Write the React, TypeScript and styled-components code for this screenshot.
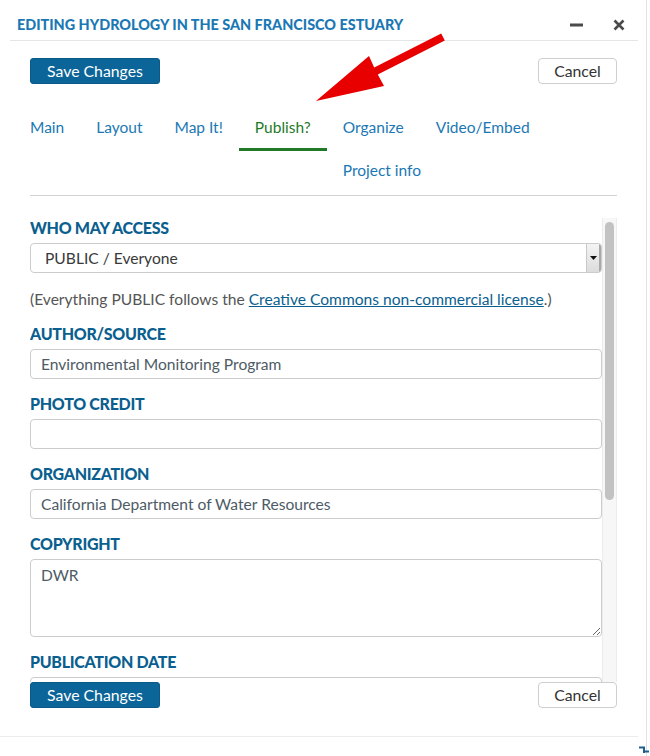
import * as React from "react";
import styled, { createGlobalStyle } from "styled-components";

const GlobalStyle = createGlobalStyle`
  html, body {
    margin: 0;
    padding: 0;
    background: #ffffff;
    overflow: hidden;
  }
  body {
    font-family: "Lato", "Open Sans", sans-serif;
    color: #333333;
  }
  * {
    box-sizing: border-box;
  }
`;

const Dialog = styled.div`
  position: relative;
  width: 647px;
  height: 756px;
  border-right: 1px solid #e2e2e2;
  display: flex;
  flex-direction: column;
`;

const Header = styled.div`
  display: flex;
  align-items: center;
  margin: 0 8px 0 10px;
  padding: 15px 12px 5px 7px;
  border-bottom: 1px solid #e6e6e6;
`;

const Title = styled.h1`
  flex: 1;
  margin: 0;
  font-size: 14.4px;
  line-height: 20px;
  font-weight: 900;
  color: #1b78b4;
  text-transform: uppercase;
`;

const WindowButton = styled.button<{ $gap: number }>`
  border: 0;
  background: none;
  padding: 0;
  margin-left: ${(p) => p.$gap}px;
  width: 14px;
  height: 20px;
  display: flex;
  align-items: center;
  justify-content: center;
  cursor: pointer;
`;

const Toolbar = styled.div<{ $top: number }>`
  display: flex;
  justify-content: space-between;
  align-items: center;
  margin: ${(p) => p.$top}px 29px 0 30px;
`;

const PrimaryButton = styled.button`
  height: 26px;
  width: 130px;
  padding: 0;
  border: 1px solid #095a87;
  border-radius: 3px;
  background: #0b6598;
  color: #ffffff;
  font-family: "Lato", sans-serif;
  font-size: 15.8px;
  line-height: 24px;
`;

const SecondaryButton = styled.button`
  height: 26px;
  width: 79px;
  padding: 0;
  border: 1px solid #cfcfcf;
  border-radius: 4px;
  background: #ffffff;
  color: #333333;
  font-family: "Lato", sans-serif;
  font-size: 15.8px;
  line-height: 24px;
`;

const TabBar = styled.div`
  margin: 21px 29px 0 30px;
  padding-bottom: 4px;
  border-bottom: 1px solid #d2d2d2;
`;

const TabList = styled.ul`
  display: flow-root;
  list-style: none;
  margin: 0 0 0 -16px;
  padding: 0;
`;

const Tab = styled.li<{ $active?: boolean }>`
  float: left;
  padding: 12px 16px 11px;
  font-size: 15.5px;
  line-height: 20px;
  color: ${(p) => (p.$active ? "#1f7a28" : "#1b78b4")};
  border-bottom: ${(p) => (p.$active ? "3px solid #1f7a28" : "0")};
  cursor: pointer;
`;

const ScrollFrame = styled.div`
  display: flex;
  margin: 22px 29px 0 30px;
  height: 464px;
`;

const ScrollContent = styled.div`
  flex: 1;
  min-width: 0;
  overflow: hidden;
`;

const ScrollTrack = styled.div`
  width: 15px;
  padding: 4px 2px 0 2px;
  background: #f7f7f7;
  border-left: 1px solid #ececec;
  border-right: 1px solid #ececec;
`;

const ScrollThumb = styled.div`
  height: 278px;
  border-radius: 5px;
  background: #c2c2c2;
`;

const Field = styled.div`
  margin-bottom: 15px;
`;

const Label = styled.label`
  display: block;
  margin-bottom: 5px;
  font-size: 16px;
  line-height: 20px;
  font-weight: 900;
  letter-spacing: -0.3px;
  color: #0b5f8f;
  text-transform: uppercase;
`;

const TextInput = styled.input`
  display: block;
  width: 100%;
  height: 30px;
  padding: 0 10px;
  border: 1px solid #cccccc;
  border-radius: 4px;
  font-family: "Lato", sans-serif;
  font-size: 15.6px;
  color: #4e5b66;
  outline: none;
`;

const TextArea = styled.textarea`
  display: block;
  width: 100%;
  height: 78px;
  padding: 5px 10px;
  border: 1px solid #cccccc;
  border-radius: 4px;
  font-family: "Lato", sans-serif;
  font-size: 15.6px;
  line-height: 20px;
  color: #4e5b66;
  outline: none;
  resize: vertical;
`;

const SelectBox = styled.div`
  display: flex;
  align-items: stretch;
  height: 30px;
  border: 1px solid #cccccc;
  border-radius: 4px;
  overflow: hidden;
`;

const SelectValue = styled.span`
  flex: 1;
  padding-left: 14px;
  font-size: 15.6px;
  line-height: 28px;
  color: #3a3a3a;
`;

const SelectArrow = styled.span`
  width: 15px;
  display: flex;
  align-items: center;
  justify-content: center;
  background: linear-gradient(#f4f4f4, #dcdcdc);
  border-left: 1px solid #c8c8c8;
  border-right: 2px solid #a9a9a9;
`;

const Note = styled.p`
  margin: 16px 0 15px;
  font-size: 15.6px;
  line-height: 20px;
  color: #555555;
`;

const NoteLink = styled.a`
  color: #0b5f8f;
  text-decoration: underline;
`;

const Footer = styled.div`
  margin: 28px 8px 0 0;
  border-top: 1px solid #ececec;
  flex: 1;
  display: flex;
  justify-content: flex-end;
  align-items: flex-end;
  padding: 0 0 3px;
`;

const ResizeGrip = styled.svg`
  margin-right: -11px;
`;

const ArrowOverlay = styled.svg`
  position: absolute;
  left: 0;
  top: 0;
  pointer-events: none;
`;

const tabs = ["Main", "Layout", "Map It!", "Publish?", "Organize", "Video/Embed", "Project info"];

export default function App() {
  return (
    <>
      <GlobalStyle />
      <Dialog>
        <Header>
          <Title>Editing Hydrology in the San Francisco Estuary</Title>
          <WindowButton $gap={0} aria-label="Minimize">
            <svg width="13" height="4" viewBox="0 0 13 4">
              <rect x="0" y="0.5" width="13" height="3" fill="#4a4a4a" />
            </svg>
          </WindowButton>
          <WindowButton $gap={29} aria-label="Close">
            <svg width="12" height="12" viewBox="0 0 12 12">
              <path d="M1.5 1.5 L10.5 10.5 M10.5 1.5 L1.5 10.5" stroke="#4a4a4a" strokeWidth="2.6" />
            </svg>
          </WindowButton>
        </Header>

        <Toolbar $top={17}>
          <PrimaryButton>Save Changes</PrimaryButton>
          <SecondaryButton>Cancel</SecondaryButton>
        </Toolbar>

        <TabBar>
          <TabList>
            {tabs.map((t) => (
              <Tab key={t} $active={t === "Publish?"}>
                {t}
              </Tab>
            ))}
          </TabList>
        </TabBar>

        <ScrollFrame>
          <ScrollContent>
            <Field>
              <Label>Who may access</Label>
              <SelectBox>
                <SelectValue>PUBLIC / Everyone</SelectValue>
                <SelectArrow>
                  <svg width="7" height="4" viewBox="0 0 7 4">
                    <path d="M0 0 H7 L3.5 4 Z" fill="#111" />
                  </svg>
                </SelectArrow>
              </SelectBox>
              <Note>
                (Everything PUBLIC follows the{" "}
                <NoteLink href="#">Creative Commons non-commercial license</NoteLink>.)
              </Note>
            </Field>
            <Field>
              <Label>Author/Source</Label>
              <TextInput defaultValue="Environmental Monitoring Program" />
            </Field>
            <Field>
              <Label>Photo credit</Label>
              <TextInput defaultValue="" />
            </Field>
            <Field>
              <Label>Organization</Label>
              <TextInput defaultValue="California Department of Water Resources" />
            </Field>
            <Field>
              <Label>Copyright</Label>
              <TextArea defaultValue="DWR" />
            </Field>
            <Field>
              <Label>Publication date</Label>
              <TextInput defaultValue="" />
            </Field>
          </ScrollContent>
          <ScrollTrack>
            <ScrollThumb />
          </ScrollTrack>
        </ScrollFrame>

        <Toolbar $top={0}>
          <PrimaryButton>Save Changes</PrimaryButton>
          <SecondaryButton>Cancel</SecondaryButton>
        </Toolbar>

        <Footer>
          <ResizeGrip width="10" height="9" viewBox="0 0 10 9">
            <path d="M0 3.5 H5 V9 M5 7.5 H10" stroke="#1d5f8f" strokeWidth="2" fill="none" />
          </ResizeGrip>
        </Footer>

        <ArrowOverlay width="650" height="120" viewBox="0 0 650 120">
          <polygon
            points="441.2,33.4 444.8,40.6 377.8,74.6 384,86 316,101 369,56 374.2,67.4"
            fill="#e80000"
          />
        </ArrowOverlay>
      </Dialog>
    </>
  );
}
